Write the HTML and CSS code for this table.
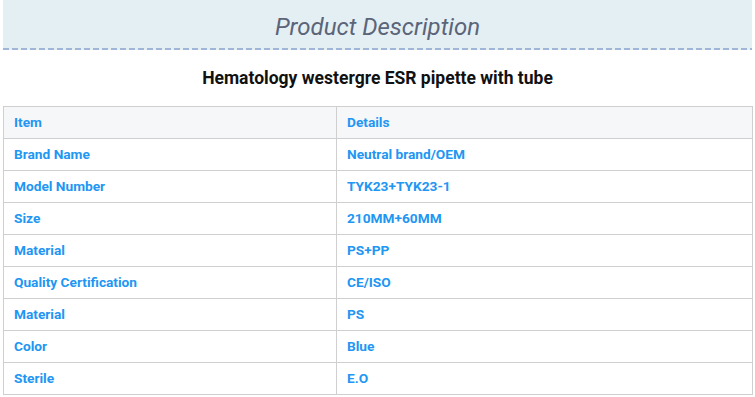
FILE: index.html
```html
<!DOCTYPE html>
<html>
<head>
<meta charset="utf-8">
<link rel="stylesheet" href="styles.css">
</head>
<body>
<div class="wrap">
  <div class="band"><h2 class="title">Product Description</h2></div>
  <h3 class="subtitle">Hematology westergre ESR pipette with tube</h3>
  <table class="spec">
    <tr class="head"><td class="c1">Item</td><td>Details</td></tr>
    <tr><td class="c1">Brand Name</td><td>Neutral brand/OEM</td></tr>
    <tr><td class="c1">Model Number</td><td>TYK23+TYK23-1</td></tr>
    <tr><td class="c1">Size</td><td>210MM+60MM</td></tr>
    <tr><td class="c1">Material</td><td>PS+PP</td></tr>
    <tr><td class="c1">Quality Certification</td><td>CE/ISO</td></tr>
    <tr><td class="c1">Material</td><td>PS</td></tr>
    <tr><td class="c1">Color</td><td>Blue</td></tr>
    <tr><td class="c1">Sterile</td><td>E.O</td></tr>
  </table>
</div>
</body>
</html>
```
FILE: styles.css
```css
html, body { margin: 0; padding: 0; background: #fff; }
body { font-family: Roboto, "Liberation Sans", sans-serif; }
.wrap { margin: 0 3px; }
.band {
  background: #e4eff4;
  height: 48px;
  display: flex; justify-content: center;
  border-bottom: 2px solid transparent;
  border-image: repeating-linear-gradient(90deg, #9fb6d6 0 6px, #e4eff4 6px 9px) 0 0 2 0;
}
.title {
  margin: 0; padding-top: 13px;
  font-size: 24px; font-weight: 400; font-style: italic;
  color: #5b6478; line-height: 28px;
}
.subtitle {
  margin: 0; padding-top: 18px; height: 38px; box-sizing: border-box;
  text-align: center; font-size: 17.5px; font-weight: 700; color: #111;
  line-height: 20px;
}
.spec {
  width: 750px; margin-top: 18px;
  border-collapse: collapse;
  table-layout: fixed;
}
.spec td {
  border: 1px solid #cfcfcf;
  height: 32px; box-sizing: border-box;
  padding: 0 10px 2px;
  color: #2196f3; font-weight: 700; font-size: 13.7px;
}
.spec td.c1 { width: 333px; }
.spec tr.head td { background: #f6f7f9; }
```
